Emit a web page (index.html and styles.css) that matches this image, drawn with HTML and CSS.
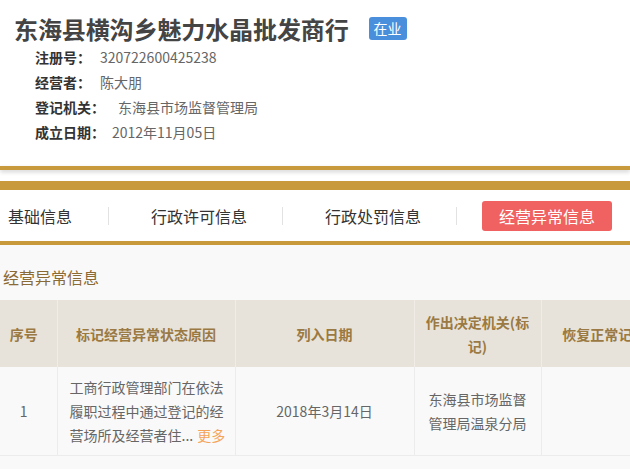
FILE: index.html
```html
<!DOCTYPE html>
<html lang="zh-CN">
<head>
<meta charset="utf-8">
<title>东海县横沟乡魅力水晶批发商行</title>
<link rel="stylesheet" href="styles.css">
</head>
<body>
<div class="page">
  <header class="head">
    <div class="title-row">
      <h1 class="title">东海县横沟乡魅力水晶批发商行</h1>
      <span class="badge">在业</span>
    </div>
    <div class="info">
      <div class="info-row"><span class="label">注册号：</span><span class="value v1">320722600425238</span></div>
      <div class="info-row"><span class="label">经营者：</span><span class="value v1">陈大朋</span></div>
      <div class="info-row"><span class="label">登记机关：</span><span class="value v2">东海县市场监督管理局</span></div>
      <div class="info-row"><span class="label">成立日期：</span><span class="value v3">2012年11月05日</span></div>
    </div>
  </header>
  <div class="rule rule-top"></div>
  <div class="rule-gap"></div>
  <nav class="tabs">
    <span class="tab tab-first">基础信息</span>
    <span class="divider"></span>
    <span class="tab">行政许可信息</span>
    <span class="divider"></span>
    <span class="tab">行政处罚信息</span>
    <span class="divider"></span>
    <span class="tab-active">经营异常信息</span>
  </nav>
  <section class="content">
    <h2 class="section-title">经营异常信息</h2>
    <div class="table-wrap">
      <table class="grid">
        <colgroup>
          <col class="c1"><col class="c2"><col class="c3"><col class="c4"><col class="c5">
        </colgroup>
        <thead>
          <tr>
            <th>序号</th>
            <th>标记经营异常状态原因</th>
            <th>列入日期</th>
            <th>作出决定机关(标记)</th>
            <th>恢复正常记载事由</th>
          </tr>
        </thead>
        <tbody>
          <tr>
            <td>1</td>
            <td class="reason">工商行政管理部门在依法履职过程中通过登记的经营场所及经营者住...<span class="more">更多</span></td>
            <td>2018年3月14日</td>
            <td>东海县市场监督管理局温泉分局</td>
            <td></td>
          </tr>
        </tbody>
      </table>
    </div>
  </section>
</div>
</body>
</html>
```
FILE: styles.css
```css
html, body {
  margin: 0;
  padding: 0;
}
body {
  font-family: "Noto Sans CJK SC", "Noto Sans", sans-serif;
  background: #f9f9f9;
  color: #333;
  width: 630px;
  overflow: hidden;
}
.page {
  width: 630px;
  overflow: hidden;
}
.head {
  background: #fff;
  padding: 13px 0 21px 14px;
}
.title-row {
  display: flex;
  align-items: center;
  height: 32px;
}
.title {
  margin: 0;
  font-size: 24px;
  line-height: 32px;
  font-weight: 700;
  color: #444;
  letter-spacing: -0.1px;
}
.badge {
  margin-left: 20px;
  background: #4a8fdc;
  color: #fff;
  font-size: 14px;
  line-height: 23px;
  height: 23px;
  padding: 0 5px;
  border-radius: 3px;
  margin-top: -2px;
}
.info {
  padding-left: 21px;
}
.info-row {
  font-size: 14px;
  line-height: 25px;
  height: 25px;
  display: flex;
}
.label {
  font-weight: 700;
  color: #333;
}
.value {
  color: #666;
}
.v1 { margin-left: 9px; }
.v2 { margin-left: 13px; }
.v3 { margin-left: 7px; }

.rule {
  height: 4px;
  background: #c99a3b;
}
.rule-top {
  box-shadow: 0 2px 4px rgba(0, 0, 0, 0.18);
  position: relative;
}
.rule-gap {
  height: 11px;
  background: #fff;
  border-bottom: 9px solid #c99a3b;
}
.tabs {
  height: 51px;
  background: #fff;
  border-bottom: 4px solid #c99a3b;
  display: flex;
  align-items: center;
  font-size: 16px;
  color: #333;
  white-space: nowrap;
}
.tab {
  margin: 0 35px 0 42px;
  line-height: 24px;
}
.tab.tab-first {
  margin-left: 8px;
  margin-right: 36px;
}
.divider {
  width: 1px;
  height: 18px;
  background: #e2e2e2;
}
.tab-active {
  margin-left: 25px;
  width: 130px;
  height: 30px;
  line-height: 30px;
  text-align: center;
  background: #f06161;
  color: #fff;
  border-radius: 3px;
}

.content {
  background: #f9f9f9;
  padding-top: 20px;
}
.section-title {
  margin: 0 0 11px 3px;
  font-size: 16px;
  line-height: 24px;
  font-weight: 400;
  color: #8a6a35;
}
.table-wrap {
  width: 630px;
  overflow: hidden;
}
.grid {
  border-collapse: collapse;
  table-layout: fixed;
  width: 704px;
  margin-left: -9px;
}
.c1 { width: 66px; }
.c2 { width: 178px; }
.c3 { width: 179px; }
.c4 { width: 127px; }
.c5 { width: 154px; }
.grid th {
  background: #e8e3da;
  color: #9a7942;
  font-size: 14px;
  font-weight: 700;
  line-height: 24px;
  height: 67px;
  padding: 0 10px;
  text-align: center;
  border-left: 1px solid #f1ede6;
  box-sizing: border-box;
}
.grid th:first-child,
.grid td:first-child {
  border-left: none;
}
.grid td {
  background: #f9f9f9;
  color: #666;
  font-size: 14px;
  line-height: 24px;
  height: 88px;
  padding: 0 12px;
  text-align: center;
  border-left: 1px solid #ececec;
  border-bottom: 1px solid #ececec;
  box-sizing: border-box;
}
.grid td.reason {
  text-align: left;
  padding: 0 8px 0 12px;
}
.more {
  color: #f5a55a;
  margin-left: 4px;
}
```
